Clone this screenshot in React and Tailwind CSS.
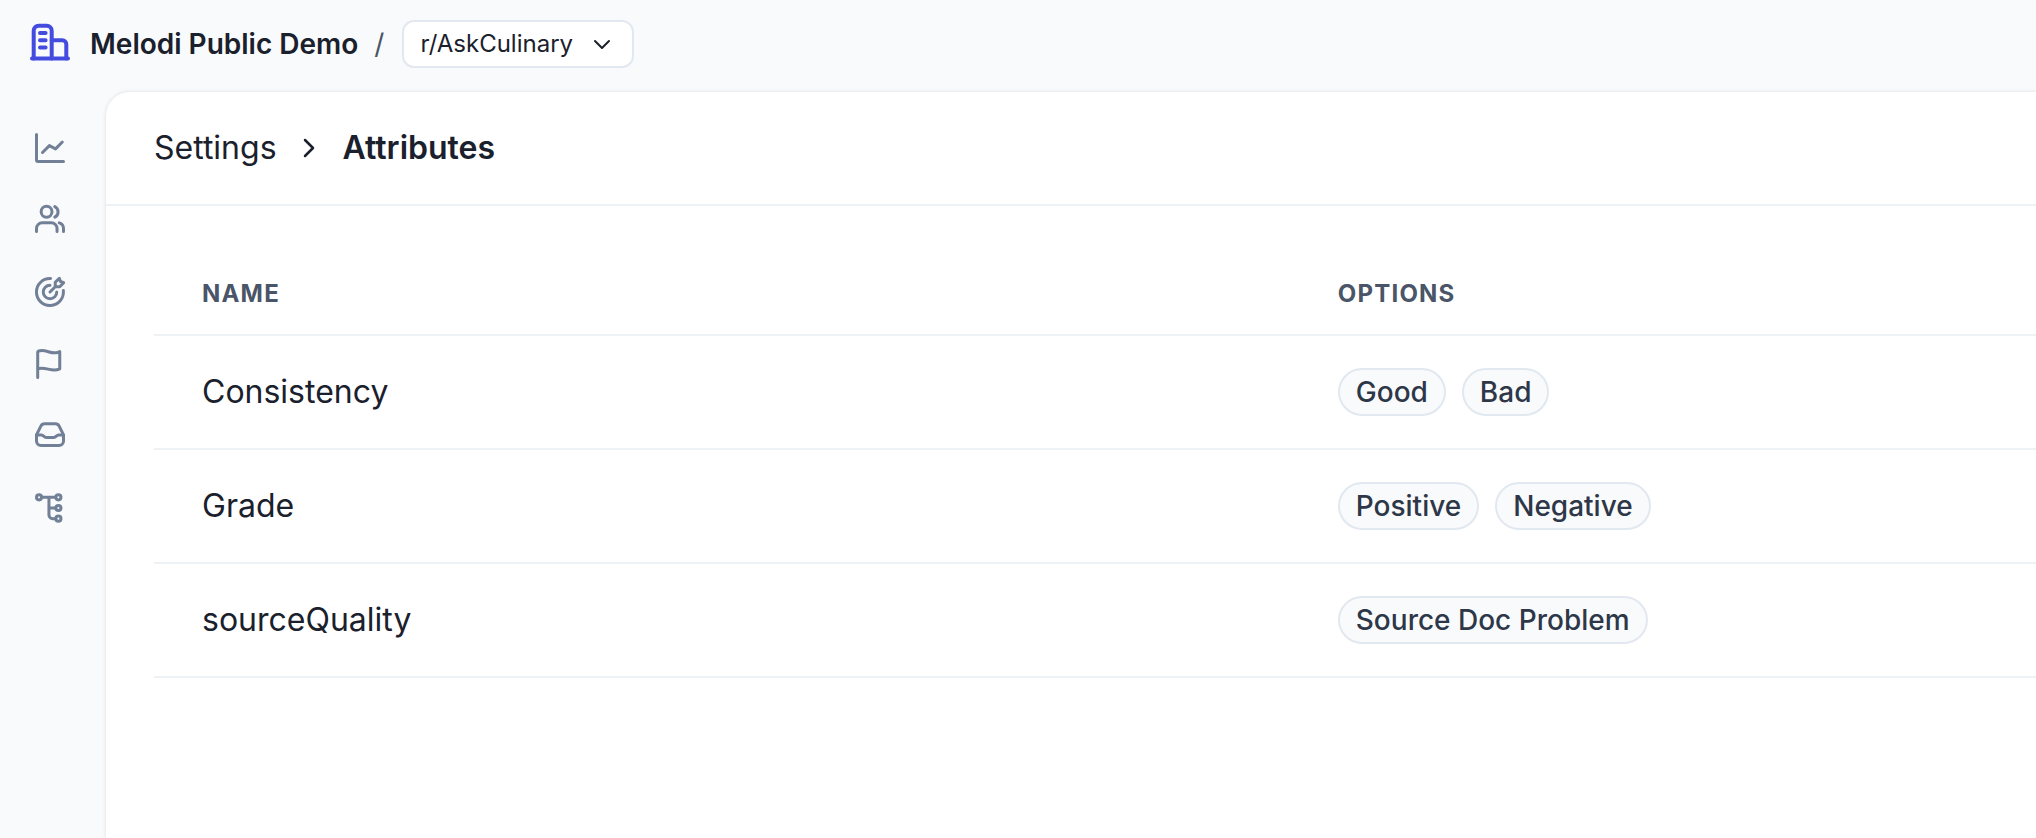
function NavIcon({ children }) {
  return (
    <svg viewBox="0 0 24 24" className="size-9" fill="none" stroke="currentColor" strokeWidth="2" strokeLinecap="round" strokeLinejoin="round" aria-hidden="true">
      {children}
    </svg>
  );
}

function BuildingLogo() {
  return (
    <svg viewBox="0 0 40 40" className="mb-1 size-10 shrink-0 text-[#444ce0]" fill="none" stroke="currentColor" strokeWidth="4" strokeLinecap="round" strokeLinejoin="round" aria-hidden="true">
      <path d="M2 36.6h36" />
      <path d="M3.7 36.6V8.7a5 5 0 0 1 5-5h8a5 5 0 0 1 5 5v27.9" />
      <path d="M21.7 18.3h10.6a4 4 0 0 1 4 4v14.3" />
      <path d="M10 11h5.6M10 18.3h5.6M10 25.6h5.6" />
    </svg>
  );
}

const navItems = [
  {
    label: "Analytics",
    icon: (
      <>
        <path d="M3 3v17a1 1 0 0 0 1 1h17" />
        <path d="M7 15l4.6-4.6 4.1 2.2L20.2 8" />
      </>
    ),
  },
  {
    label: "Users",
    icon: (
      <>
        <circle cx="9.7" cy="6.5" r="3.6" />
        <path d="M15.2 3.1a3.9 3.9 0 0 1 0 7" />
        <path d="M3 19.7v-2a3.8 3.8 0 0 1 3.8-3.8h6.1a3.8 3.8 0 0 1 3.8 3.8v2" />
        <path d="M18.2 13.9a4 4 0 0 1 2.8 3.8v2" />
      </>
    ),
  },
  {
    label: "Goals",
    icon: (
      <>
        <path d="M12.4 3A9 9 0 1 0 20.9 11" />
        <path d="M12 7.5a4.5 4.5 0 1 0 4.5 4.5" />
        <path d="M12 12l3.5-3.5V5.5L18.2 2.9 19 5l2.1.8-2.6 2.7h-3" />
      </>
    ),
  },
  {
    label: "Flags",
    icon: <path d="M3.8 21V4.2c0-.5.2-.7.7-.9C9 2 12 5.2 16 4.5c.9-.1 1.7-.4 2.5-.8V15.2C13.3 17.8 9 13.4 3.8 15.2" />,
  },
  {
    label: "Inbox",
    icon: (
      <>
        <path d="M3 11.3l2.9-5.9A2.8 2.8 0 0 1 8.4 3.8h7.2a2.8 2.8 0 0 1 2.5 1.6L21 11.3v4.1a3 3 0 0 1-3 3H6a3 3 0 0 1-3-3z" />
        <path d="M3 11.3h3.3c1.4 0 1.6 1.7 3.2 1.7h5c1.6 0 1.8-1.7 3.2-1.7H21" />
      </>
    ),
  },
  {
    label: "Taxonomy",
    icon: (
      <>
        <circle cx="4.7" cy="4.9" r="1.7" />
        <circle cx="17.6" cy="4.9" r="1.7" />
        <circle cx="17.6" cy="12" r="1.7" />
        <circle cx="17.6" cy="19.1" r="1.7" />
        <path d="M6.5 4.9h9.3M11.3 4.9v11.7a2.5 2.5 0 0 0 2.5 2.5h2M11.3 12h4.5" />
      </>
    ),
  },
];

const attributes = [
  { name: "Consistency", options: ["Good", "Bad"] },
  { name: "Grade", options: ["Positive", "Negative"] },
  { name: "sourceQuality", options: ["Source Doc Problem"] },
];

export default function App() {
  return (
    <div className="flex min-h-screen flex-col bg-[#f9fafc] font-['Inter',sans-serif] text-[#1a202c]">
      <header className="flex h-[92px] items-center px-[30px] pb-1">
        <BuildingLogo />
        <span className="ml-5 text-[28px] leading-9 font-semibold">Melodi Public Demo</span>
        <span className="ml-4 text-[28px] leading-9 text-[#4a5568]">/</span>
        <div className="relative ml-[18px]">
          <select
            aria-label="Project"
            defaultValue="r/AskCulinary"
            className="h-12 w-[232px] appearance-none rounded-xl border-2 border-[#e2e8f0] bg-white pr-14 pl-4 text-2xl leading-8"
          >
            <option>r/AskCulinary</option>
          </select>
          <svg viewBox="0 0 20 20" className="pointer-events-none absolute top-3.5 right-[22px] size-5" fill="none" stroke="currentColor" strokeWidth="2" strokeLinecap="round" strokeLinejoin="round" aria-hidden="true">
            <path d="M3 7l7 7 7-7" />
          </svg>
        </div>
      </header>

      <div className="flex flex-1">
        <nav aria-label="Main" className="flex w-[106px] shrink-0 flex-col gap-9 pt-[38px] pl-8 text-[#718096]">
          {navItems.map((item) => (
            <a key={item.label} href="#" aria-label={item.label} className="block size-9">
              <NavIcon>{item.icon}</NavIcon>
            </a>
          ))}
        </nav>

        <main className="min-w-0 flex-1 rounded-tl-3xl bg-white shadow-[0_0_4px_rgba(0,0,0,0.12)]">
          <nav aria-label="Breadcrumb" className="border-b-2 border-[#edf2f7] px-12 py-8">
            <ol className="flex items-center text-[32px] leading-[48px]">
              <li>
                <a href="#">Settings</a>
              </li>
              <li aria-hidden="true" className="mr-6 ml-[22px]">
                <svg viewBox="0 0 20 20" className="size-5" fill="none" stroke="currentColor" strokeWidth="2.5" strokeLinecap="round" strokeLinejoin="round">
                  <path d="M6 2l8 8-8 8" />
                </svg>
              </li>
              <li aria-current="page" className="font-semibold">
                Attributes
              </li>
            </ol>
          </nav>

          <div className="pt-12 pl-12">
            <table className="w-full table-fixed border-collapse text-left">
              <thead>
                <tr className="border-b-2 border-[#edf2f7] text-2xl leading-8 tracking-wider text-[#4a5568]">
                  <th scope="col" className="w-[60.35%] px-12 py-6 font-bold">NAME</th>
                  <th scope="col" className="px-12 py-6 font-bold">OPTIONS</th>
                </tr>
              </thead>
              <tbody>
                {attributes.map((attribute) => (
                  <tr key={attribute.name} className="border-b-2 border-[#edf2f7]">
                    <td className="px-12 py-8 text-[32px] leading-[48px]">{attribute.name}</td>
                    <td className="px-12 py-8">
                      <ul className="flex gap-4">
                        {attribute.options.map((option) => (
                          <li
                            key={option}
                            className="flex h-12 items-center rounded-full border-2 border-[#e2e8f0] bg-[#f9fafc] px-4 text-[28px] leading-10 font-medium whitespace-nowrap text-[#2d3748]"
                          >
                            {option}
                          </li>
                        ))}
                      </ul>
                    </td>
                  </tr>
                ))}
              </tbody>
            </table>
          </div>
        </main>
      </div>
    </div>
  );
}
